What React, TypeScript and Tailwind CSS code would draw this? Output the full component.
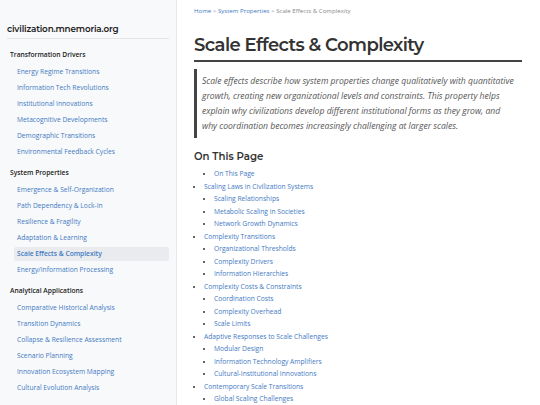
import React from 'react';

interface NavSection {
    title: string;
    items: string[];
}

const nav: NavSection[] = [
    {
        title: 'Transformation Drivers',
        items: [
            'Energy Regime Transitions',
            'Information Tech Revolutions',
            'Institutional Innovations',
            'Metacognitive Developments',
            'Demographic Transitions',
            'Environmental Feedback Cycles',
        ],
    },
    {
        title: 'System Properties',
        items: [
            'Emergence & Self-Organization',
            'Path Dependency & Lock-In',
            'Resilience & Fragility',
            'Adaptation & Learning',
            'Scale Effects & Complexity',
            'Energy/Information Processing',
        ],
    },
    {
        title: 'Analytical Applications',
        items: [
            'Comparative Historical Analysis',
            'Transition Dynamics',
            'Collapse & Resilience Assessment',
            'Scenario Planning',
            'Innovation Ecosystem Mapping',
            'Cultural Evolution Analysis',
        ],
    },
];

const toc: { label: string; children: string[] }[] = [
    { label: '', children: ['On This Page'] },
    { label: 'Scaling Laws in Civilization Systems', children: ['Scaling Relationships', 'Metabolic Scaling in Societies', 'Network Growth Dynamics'] },
    { label: 'Complexity Transitions', children: ['Organizational Thresholds', 'Complexity Drivers', 'Information Hierarchies'] },
    { label: 'Complexity Costs & Constraints', children: ['Coordination Costs', 'Complexity Overhead', 'Scale Limits'] },
    { label: 'Adaptive Responses to Scale Challenges', children: ['Modular Design', 'Information Technology Amplifiers', 'Cultural-Institutional Innovations'] },
    { label: 'Contemporary Scale Transitions', children: ['Global Scaling Challenges'] },
];

const ACTIVE = 'Scale Effects & Complexity';
const heading = "font-['Montserrat','Open_Sans',sans-serif]";

// sidebar nav
const Sidebar: React.FC = () => (
    <aside className="w-[177px] shrink-0 h-[405px] overflow-hidden bg-[#f8f9fa] border-r border-[#e6e8eb] px-[7px] pt-[22px]">
        <div className={`${heading} text-[8.8px] font-semibold text-[#222] leading-[14px] tracking-[-0.15px]`}>civilization.mnemoria.org</div>
        <div className="mt-[2px] border-b border-[#e3e5e8]" />
        {nav.map((sec, i) => (
            <div key={sec.title} className={i === 0 ? 'mt-[9px]' : 'mt-[6px]'}>
                <div className="h-[14px] leading-[14px] pl-[3px] text-[6.7px] font-semibold text-[#222]">{sec.title}</div>
                <ul className="mt-[2px]">
                    {sec.items.map(item => {
                        const active = item === ACTIVE;
                        return (
                            <li key={item} className="h-[16px] py-[1px]">
                                <a className={`block h-[14px] leading-[14px] pl-[3px] ml-[7px] rounded-[2px] text-[6.7px] text-[#3f7ac4] ${active ? 'bg-[#e9ebee] font-semibold' : ''}`}>{item}</a>
                            </li>
                        );
                    })}
                </ul>
            </div>
        ))}
    </aside>
);

export default function App() {
    return (
        <div className="flex w-[540px] h-[405px] overflow-hidden bg-white font-['Open_Sans',sans-serif]">
            <Sidebar />
            <main className="flex-1 pl-[17px] pr-[18px] pt-[6px] overflow-hidden">
                <div className="text-[6.1px] leading-[10px] text-[#888]">
                    <a className="text-[#3f7ac4]">Home</a> &gt; <a className="text-[#3f7ac4]">System Properties</a> &gt; Scale Effects &amp; Complexity
                </div>
                <h1 className={`${heading} mt-[17px] text-[18px] font-semibold text-[#333] leading-[24px] tracking-[-0.6px] pb-[3px] border-b-2 border-[#444]`}>Scale Effects &amp; Complexity</h1>
                <blockquote className="mt-[7px] border-l-[3px] border-[#444] pl-[5px] pr-[7px] pt-[5px] pb-[4px] text-[8.6px] italic text-[#555] leading-[15px]">
                    Scale effects describe how system properties change qualitatively with quantitative growth, creating new organizational levels and constraints. This property helps explain why civilizations develop different institutional forms as they grow, and why coordination becomes increasingly challenging at larger scales.
                </blockquote>
                <h2 className={`${heading} mt-[12px] text-[10.2px] font-semibold text-[#333] leading-[14px]`}>On This Page</h2>
                <ul className="mt-[4px] pl-[10px] list-disc text-[6.7px] leading-[12.5px] text-[#3f7ac4] marker:text-[#333]">
                    {toc.map((t, i) => (
                        <React.Fragment key={i}>
                            {t.label ? (
                                <li>
                                    <a>{t.label}</a>
                                    <ul className="pl-[10px] list-disc">
                                        {t.children.map(c => <li key={c}><a>{c}</a></li>)}
                                    </ul>
                                </li>
                            ) : (
                                <ul className="pl-[10px] list-disc">
                                    {t.children.map(c => <li key={c}><a>{c}</a></li>)}
                                </ul>
                            )}
                        </React.Fragment>
                    ))}
                </ul>
            </main>
        </div>
    );
}
